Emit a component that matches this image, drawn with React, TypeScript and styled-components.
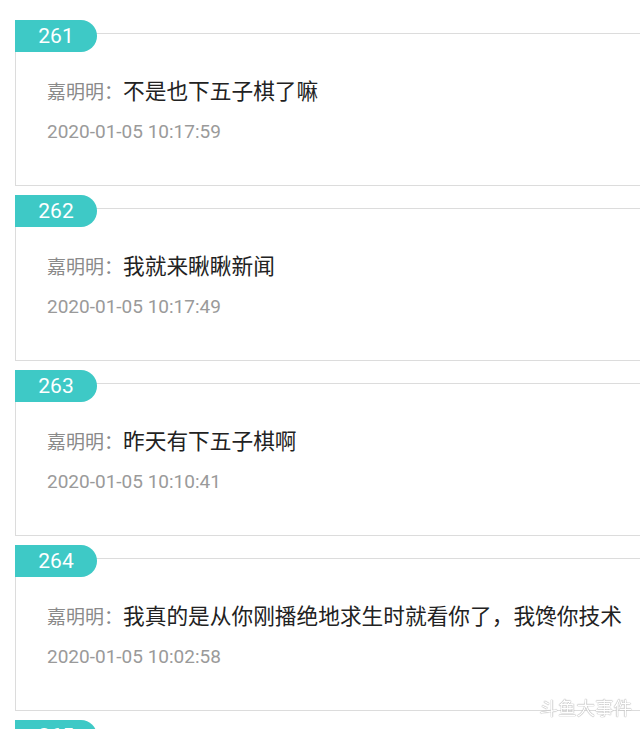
import styled, { createGlobalStyle } from 'styled-components';

const GlobalStyle = createGlobalStyle`
  html, body {
    margin: 0;
    padding: 0;
    background: #ffffff;
    overflow: hidden;
  }
  body {
    font-family: Roboto, 'Noto Sans CJK SC', sans-serif;
  }
`;

const List = styled.div`
  padding: 20px 0 0 15px;
`;

const Item = styled.div`
  position: relative;
  padding-top: 13px;
  margin-bottom: 9px;
`;

const Badge = styled.div`
  position: absolute;
  top: 0;
  left: 0;
  width: 82px;
  height: 32px;
  border-radius: 0 16px 16px 0;
  background-color: #3ec9c6;
  color: #ffffff;
  font-family: Roboto, sans-serif;
  font-size: 21px;
  line-height: 32px;
  text-align: center;
  z-index: 1;
`;

const Card = styled.div`
  border: 1px solid #dcdcdc;
  border-right: none;
  padding: 41px 0 41px 31px;
`;

const Message = styled.div`
  display: flex;
  align-items: baseline;
  height: 30px;
  line-height: 30px;
  white-space: nowrap;
`;

const Name = styled.span`
  font-family: 'Noto Sans CJK SC', sans-serif;
  font-size: 19px;
  color: #8a8a8a;
`;

const Text = styled.span`
  font-family: 'Noto Sans CJK SC', sans-serif;
  font-size: 21.7px;
  color: #222222;
`;

const Time = styled.div`
  margin-top: 15px;
  height: 24px;
  line-height: 24px;
  font-family: Roboto, sans-serif;
  font-size: 19px;
  color: #9a9a9a;
`;

const Watermark = styled.div`
  position: fixed;
  right: 8px;
  bottom: 9px;
  font-family: 'Noto Sans CJK SC', sans-serif;
  font-size: 18.5px;
  color: #ffffff;
  text-shadow: 0 0 1px #8f8f8f, 0 0 1px #a8a8a8;
`;

const comments = [
  { no: 261, text: '不是也下五子棋了嘛', time: '2020-01-05 10:17:59' },
  { no: 262, text: '我就来瞅瞅新闻', time: '2020-01-05 10:17:49' },
  { no: 263, text: '昨天有下五子棋啊', time: '2020-01-05 10:10:41' },
  { no: 264, text: '我真的是从你刚播绝地求生时就看你了，我馋你技术', time: '2020-01-05 10:02:58' },
  { no: 265, text: '主播加油', time: '2020-01-05 09:58:12' },
];

const App = () => {
  return (
    <>
      <GlobalStyle />
      <List>
        {comments.map((c) => (
          <Item key={c.no}>
            <Badge>{c.no}</Badge>
            <Card>
              <Message>
                <Name>嘉明明：</Name>
                <Text>{c.text}</Text>
              </Message>
              <Time>{c.time}</Time>
            </Card>
          </Item>
        ))}
      </List>
      <Watermark>斗鱼大事件</Watermark>
    </>
  );
};

export default App;
